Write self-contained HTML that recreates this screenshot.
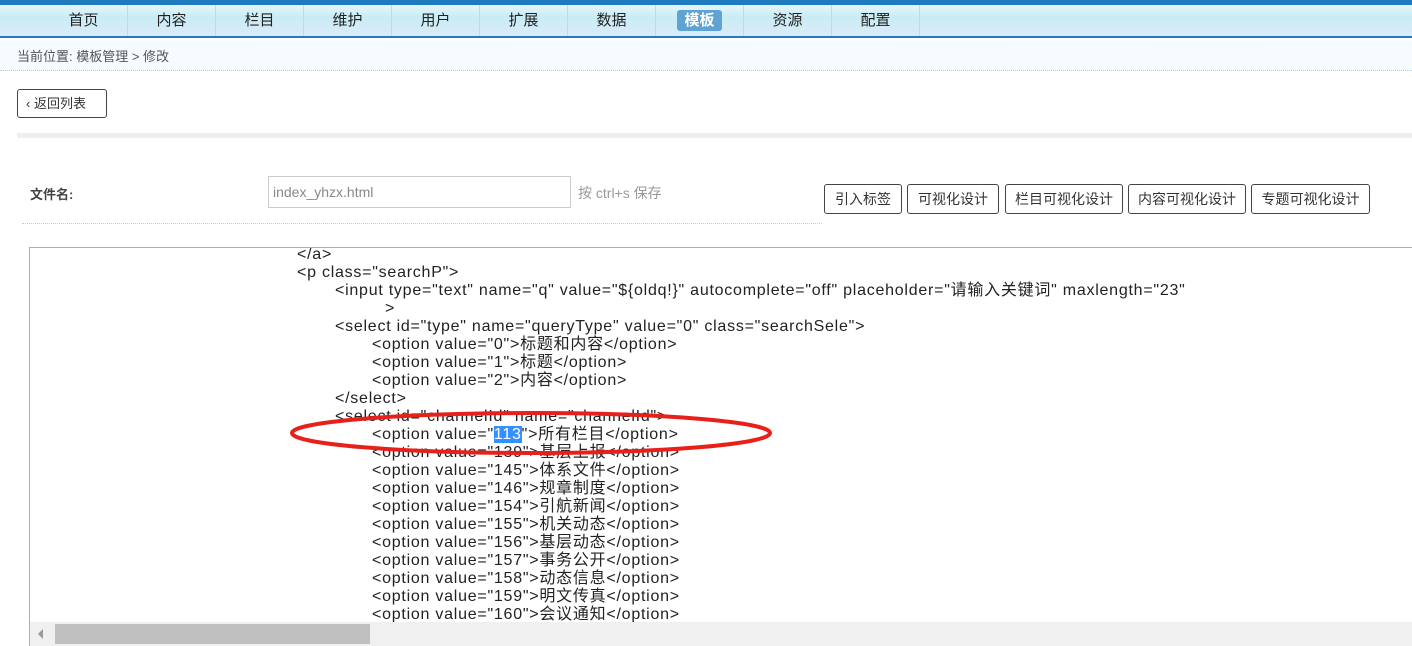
<!DOCTYPE html>
<html><head><meta charset="utf-8"><style>
*{margin:0;padding:0;box-sizing:border-box}
body{width:1412px;height:646px;overflow:hidden;background:#fff;font-family:"Liberation Sans","Noto Sans CJK SC",sans-serif;position:relative;color:#333}
.top{position:absolute;left:0;top:0;width:1412px;height:5px;background:#1e7bbf}
.nav{position:absolute;left:0;top:5px;width:1412px;height:33px;background:linear-gradient(#e6f6fb,#c8ecf5 40%,#dcebf8);border-bottom:2px solid #2a78b8}
.nav span{position:absolute;top:0;height:31px;line-height:31px;font-size:15px;color:#222;width:88px;text-align:center;border-right:1px solid #c5d8e4}
.nav span.on b{background:#5ea3d3;color:#fff;border-radius:3px;padding:2px 7px;font-weight:bold}
.crumb{position:absolute;left:0;top:40px;width:1412px;height:31px;background:#f5fbff;border-bottom:1px dotted #a9d4ee;font-size:13px;color:#555;padding:6px 17px}
.back{position:absolute;left:17px;top:89px;width:90px;height:29px;border:1px solid #444;border-radius:3px;font-size:13px;line-height:27px;padding-left:8px;color:#333}
.bar{position:absolute;left:17px;top:133px;width:1395px;height:5px;background:#eee}
.lbl{position:absolute;left:30px;top:184px;font-size:13px;font-weight:bold;color:#444}
.inp{position:absolute;left:268px;top:176px;width:303px;height:32px;border:1px solid #ccc;font-size:14px;color:#888;padding:7px 4px}
.hint{position:absolute;left:578px;top:183px;font-size:14px;color:#999}
.dl{position:absolute;left:22px;top:223px;width:800px;border-top:1px dotted #ccc}
.btn{position:absolute;top:184px;height:30px;border:1px solid #444;border-radius:3px;font-size:14px;line-height:28px;text-align:center;color:#333}
.ed{position:absolute;left:29px;top:247px;width:1400px;height:399px;border-top:1px solid #e8a060;border-left:1px solid #e8a060;overflow:hidden}
.code{position:absolute;left:0;top:-2px;font-size:16px;line-height:18px;color:#222;white-space:nowrap;letter-spacing:0.75px}
.code div{position:relative;height:18px}
.sb{position:absolute;left:30px;top:622px;width:1382px;height:24px;background:#f0f0f0}
.thumb{position:absolute;left:25px;top:2px;width:315px;height:20px;background:#c0c0c0}
.arr{position:absolute;left:8px;top:7px;width:0;height:0;border-top:5px solid transparent;border-bottom:5px solid transparent;border-right:5px solid #999}
.sel{background:#3390ff;color:#fff}
</style></head><body>
<div class="top"></div>
<div class="nav">
<span style="left:40px">首页</span><span style="left:128px">内容</span><span style="left:216px">栏目</span><span style="left:304px">维护</span><span style="left:392px">用户</span><span style="left:480px">扩展</span><span style="left:568px">数据</span><span class="on" style="left:656px"><b>模板</b></span><span style="left:744px">资源</span><span style="left:832px">配置</span>
</div>
<div class="crumb">当前位置: 模板管理 &gt; 修改</div>
<div class="back">&lsaquo; 返回列表</div>
<div class="bar"></div>
<div class="lbl">文件名:</div>
<div class="inp">index_yhzx.html</div>
<div class="hint">按 ctrl+s 保存</div>
<div class="dl"></div>
<div class="btn" style="left:824px;width:78px">引入标签</div>
<div class="btn" style="left:907px;width:92px">可视化设计</div>
<div class="btn" style="left:1005px;width:118px">栏目可视化设计</div>
<div class="btn" style="left:1128px;width:118px">内容可视化设计</div>
<div class="btn" style="left:1251px;width:119px">专题可视化设计</div>
<div class="ed"><div class="code"><div style="left:267px">&lt;/a&gt;</div><div style="left:267px">&lt;p class="searchP"&gt;</div><div style="left:305px">&lt;input type="text" name="q" value="${oldq!}" autocomplete="off" placeholder="请输入关键词" maxlength="23"</div><div style="left:355px">&gt;</div><div style="left:305px">&lt;select id="type" name="queryType" value="0" class="searchSele"&gt;</div><div style="left:342px">&lt;option value="0"&gt;标题和内容&lt;/option&gt;</div><div style="left:342px">&lt;option value="1"&gt;标题&lt;/option&gt;</div><div style="left:342px">&lt;option value="2"&gt;内容&lt;/option&gt;</div><div style="left:305px">&lt;/select&gt;</div><div style="left:305px">&lt;select id="channelId" name="channelId"&gt;</div><div style="left:342px">&lt;option value="<span class="sel">113</span>"&gt;所有栏目&lt;/option&gt;</div><div style="left:342px">&lt;option value="139"&gt;基层上报&lt;/option&gt;</div><div style="left:342px">&lt;option value="145"&gt;体系文件&lt;/option&gt;</div><div style="left:342px">&lt;option value="146"&gt;规章制度&lt;/option&gt;</div><div style="left:342px">&lt;option value="154"&gt;引航新闻&lt;/option&gt;</div><div style="left:342px">&lt;option value="155"&gt;机关动态&lt;/option&gt;</div><div style="left:342px">&lt;option value="156"&gt;基层动态&lt;/option&gt;</div><div style="left:342px">&lt;option value="157"&gt;事务公开&lt;/option&gt;</div><div style="left:342px">&lt;option value="158"&gt;动态信息&lt;/option&gt;</div><div style="left:342px">&lt;option value="159"&gt;明文传真&lt;/option&gt;</div><div style="left:342px">&lt;option value="160"&gt;会议通知&lt;/option&gt;</div></div></div>
<svg style="position:absolute;left:0;top:0" width="1412" height="646"><ellipse cx="531" cy="433" rx="239" ry="20" fill="none" stroke="#e8201a" stroke-width="4"/></svg>
<div class="sb"><div class="arr"></div><div class="thumb"></div></div>
</body></html>
